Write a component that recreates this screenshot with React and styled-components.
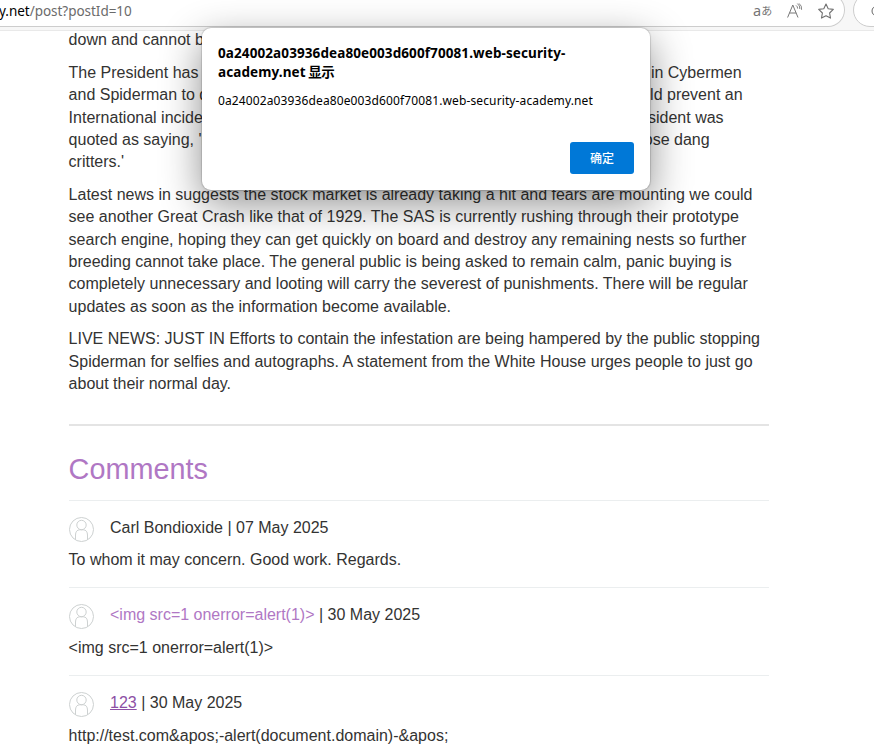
import React from 'react';
import styled, { createGlobalStyle } from 'styled-components';

const GlobalStyle = createGlobalStyle`
  * { box-sizing: border-box; }
  body { margin: 0; background: #fff; overflow: hidden; }
`;

const Page = styled.div`
  position: relative;
  width: 874px;
  height: 755px;
  overflow: hidden;
  background: #fff;
  color: #333332;
  font: 16px/22.4px 'Liberation Sans', Arial, sans-serif;
`;

const Toolbar = styled.header`
  display: flex;
  gap: 8px;
  height: 31px;
  overflow: hidden;
  background: #f7f7f7;
  border-bottom: 1px solid #e9e9e9;
`;

const AddressBar = styled.div`
  display: flex;
  flex: none;
  justify-content: space-between;
  width: 846px;
  height: 34px;
  margin: -7px 0 0 -1px;
  padding: 0 10px 0 0;
  border: 1px solid #cdcdcd;
  border-left: 0;
  border-radius: 0 17px 17px 0;
  background: #fff;
`;

const Url = styled.div`
  margin-top: 7px;
  color: #6b6b6b;
  font: 13.5px/20px 'Noto Sans', sans-serif;
  letter-spacing: -0.03px;
  white-space: nowrap;
  b { color: #000; font-weight: 400; }
`;

const Tools = styled.div`
  display: flex;
  color: #757575;
  svg { display: block; flex: none; }
`;

const Translate = styled.span`
  display: flex;
  width: 34px;
  margin-top: 6px;
  font: 14.5px/20px 'Noto Sans', sans-serif;
  white-space: nowrap;
`;

const Kana = styled.small`
  font: 400 11px/21px 'Noto Sans CJK JP', sans-serif;
`;

const SearchPill = styled.div`
  flex: none;
  width: 60px;
  height: 34px;
  margin-top: -7px;
  padding: 11px 0 0 17px;
  border: 1px solid #cdcdcd;
  border-radius: 17px;
  background: #fff;
  svg { display: block; }
`;

const Viewport = styled.div`
  height: 724px;
  overflow: hidden;
`;

const Article = styled.main`
  width: 700px;
  margin: -1.55px 0 0 68.6px;
`;

const Paragraph = styled.div`
  margin-bottom: 10px;
  white-space: nowrap;
`;

const Line = styled.div`
  display: flex;
  justify-content: space-between;
  width: ${({ $width }) => ($width ? `${$width}px` : 'auto')};
  height: 22.4px;
`;

const Rule = styled.hr`
  height: ${({ $thick }) => ($thick ? 2 : 1)}px;
  margin: ${({ $thick }) => ($thick ? '28.55px' : 0)} 0 0;
  border: 0;
  background: ${({ $thick }) => ($thick ? '#e4e4e4' : '#ebeeef')};
`;

const Heading = styled.h1`
  height: 74px;
  margin: 0;
  padding-top: 23px;
  color: #b077c4;
  font-size: 28.8px;
  font-weight: 400;
  line-height: 40px;
`;

const Comment = styled.section`
  height: ${({ $height }) => $height}px;
  padding-top: 16px;
`;

const Author = styled.div`
  display: flex;
  gap: 16.4px;
  height: ${({ $height }) => $height}px;
  svg { display: block; flex: none; }
`;

const AuthorLink = styled.span`
  color: ${({ $visited }) => ($visited ? '#8d4fa5' : '#b077c4')};
  text-decoration: ${({ $visited }) => ($visited ? 'underline' : 'none')};
`;

const Dialog = styled.div`
  position: absolute;
  top: 28px;
  left: 202px;
  display: flex;
  flex-direction: column;
  width: 448px;
  height: 162px;
  padding: 16px;
  border-radius: 9px;
  background: #fff;
  color: #000;
  box-shadow: 0 0 0 1px rgba(0, 0, 0, 0.09), 0 0 3px rgba(0, 0, 0, 0.1), 0 13px 40px rgba(0, 0, 0, 0.45);
  white-space: nowrap;
`;

const DialogTitle = styled.div`
  height: 38px;
  font: 700 13.5px/19px 'Noto Sans', 'Noto Sans CJK SC', sans-serif;
  letter-spacing: 0.1px;
`;

const Shown = styled.span`
  margin-left: -1px;
  letter-spacing: -0.6px;
`;

const DialogText = styled.div`
  margin-top: 9px;
  font: 12px/20px 'Noto Sans', sans-serif;
  letter-spacing: 0.12px;
`;

const Confirm = styled.button`
  align-self: flex-end;
  width: 64px;
  height: 32px;
  margin-top: auto;
  padding: 0;
  border: 0;
  border-radius: 3px;
  background: #0078d7;
  color: #fff;
  font: 500 12px/32px 'Noto Sans CJK SC', sans-serif;
`;

const Avatar = () => (
  <svg width="25" height="26" viewBox="0 0 25 26" fill="none" stroke="#cdd1d1">
    <circle cx="12.5" cy="12.5" r="12" />
    <circle cx="12.5" cy="8" r="4.7" />
    <path d="M6.5 22.8v-4.8c0-3.2 1.6-5.2 4.2-5.2h3.6c2.6 0 4.2 2 4.2 5.2v4.8" />
  </svg>
);

const ReadAloudIcon = () => (
  <svg width="31" height="32" viewBox="0 0 31 32" fill="none" stroke="#777">
    <path d="M.6 23.5 5.8 11 11 23.5M2.5 19h6.7" />
    <path d="M9 11.4q1.8 1.2 1.6 3.2M10.4 9.6q2.9 2.2 2.4 5.4M12 9.4q3.2 2.4 2.6 6.4" strokeWidth=".9" />
  </svg>
);

const StarIcon = () => (
  <svg width="16" height="32" viewBox="0 0 16 32" fill="none" stroke="#707070" strokeWidth="1.1" strokeLinejoin="round">
    <path d="m8 10 2.2 4.7 5.1.7-3.7 3.6.9 5.1L8 21.7l-4.5 2.4.9-5.1L.7 15.4l5.1-.7z" />
  </svg>
);

const LATEST = [
  'Latest news in suggests the stock market is already taking a hit and fears are mounting we could',
  'see another Great Crash like that of 1929. The SAS is currently rushing through their prototype',
  'search engine, hoping they can get quickly on board and destroy any remaining nests so further',
  'breeding cannot take place. The general public is being asked to remain calm, panic buying is',
  'completely unnecessary and looting will carry the severest of punishments. There will be regular',
  'updates as soon as the information become available.',
];

const LIVE = [
  'LIVE NEWS: JUST IN Efforts to contain the infestation are being hampered by the public stopping',
  'Spiderman for selfies and autographs. A statement from the White House urges people to just go',
  'about their normal day.',
];

const PRESIDENT = [
  ['The President has', 'in Cybermen', 673],
  ['and Spiderman to d', 'could prevent an', 674],
  ['International incident', 'President was', 655],
  ["quoted as saying, 'l", 'those dang', 641],
  ["critters.'", '', 0],
];

const COMMENTS = [
  { name: 'Carl Bondioxide', date: '07 May 2025', body: 'To whom it may concern. Good work. Regards.', height: 86, authorHeight: 32 },
  { name: '<img src=1 onerror=alert(1)>', date: '30 May 2025', body: '<img src=1 onerror=alert(1)>', link: true, height: 87, authorHeight: 33 },
  { name: '123', date: '30 May 2025', body: 'http://test.com&apos;-alert(document.domain)-&apos;', link: true, visited: true, height: 87, authorHeight: 33 },
];

export default function App() {
  return (
    <Page>
      <GlobalStyle />
      <Toolbar>
        <AddressBar>
          <Url><b>y.net</b>/post?postId=10</Url>
          <Tools>
            <Translate>a<Kana>あ</Kana></Translate>
            <ReadAloudIcon />
            <StarIcon />
          </Tools>
        </AddressBar>
        <SearchPill>
          <svg width="12" height="16" viewBox="0 0 12 16" fill="none" stroke="#666">
            <circle cx="6" cy="6" r="5" />
          </svg>
        </SearchPill>
      </Toolbar>
      <Viewport>
        <Article>
          <Paragraph><Line>down and cannot be</Line></Paragraph>
          <Paragraph>
            {PRESIDENT.map(([start, end, width]) => (
              <Line key={start} $width={width}><span>{start}</span><span>{end}</span></Line>
            ))}
          </Paragraph>
          <Paragraph>{LATEST.map((t) => <Line key={t}>{t}</Line>)}</Paragraph>
          <Paragraph>{LIVE.map((t) => <Line key={t}>{t}</Line>)}</Paragraph>
          <Rule $thick />
          <Heading>Comments</Heading>
          {COMMENTS.map((c) => (
            <React.Fragment key={c.name}>
              <Rule />
              <Comment $height={c.height}>
                <Author $height={c.authorHeight}>
                  <Avatar />
                  <span>
                    {c.link ? <AuthorLink $visited={c.visited}>{c.name}</AuthorLink> : c.name} | {c.date}
                  </span>
                </Author>
                <div>{c.body}</div>
              </Comment>
            </React.Fragment>
          ))}
        </Article>
      </Viewport>
      <Dialog role="alertdialog">
        <DialogTitle>
          0a24002a03936dea80e003d600f70081.web-security-<br />academy.net <Shown>显示</Shown>
        </DialogTitle>
        <DialogText>0a24002a03936dea80e003d600f70081.web-security-academy.net</DialogText>
        <Confirm>确定</Confirm>
      </Dialog>
    </Page>
  );
}
